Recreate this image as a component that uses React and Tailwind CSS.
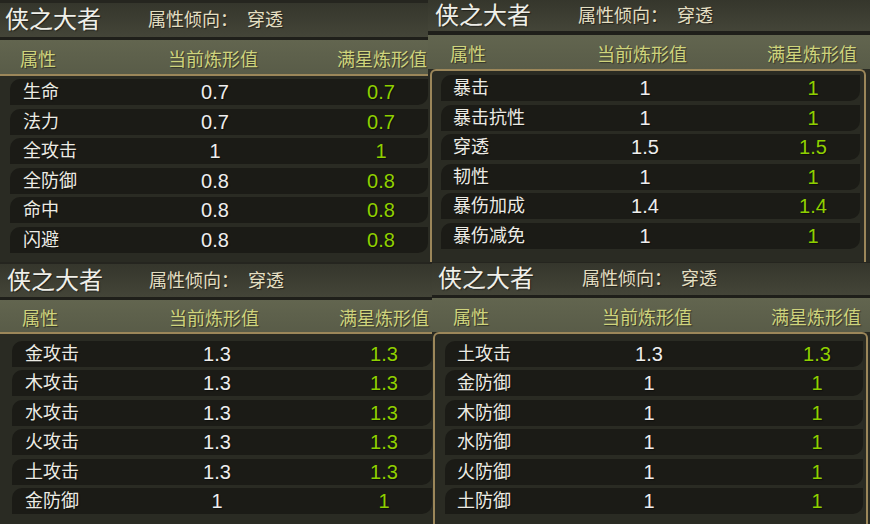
import React from "react";

const panels = [
  {
    w: "w-[428px]",
    strip: "h-[3px]",
    title: "h-[34px] pl-[5px]",
    tend: "ml-[47px]",
    dark: "h-[3px]",
    header: "h-[34px] pt-[5px]",
    hcols: "grid-cols-[163px_100px_69px_100px]",
    hpl: "pl-[20px]",
    box: "border-t-2 pt-[3px] pl-[10px] gap-[3.6px]",
    rcols: "grid-cols-[155px_100px_66px_100px]",
    rpl: "pl-[13px]",
    rows: [
      ["生命", "0.7"],
      ["法力", "0.7"],
      ["全攻击", "1"],
      ["全防御", "0.8"],
      ["命中", "0.8"],
      ["闪避", "0.8"],
    ],
  },
  {
    w: "w-[442px]",
    strip: "h-0",
    title: "h-[31px] pl-[7px]",
    tend: "ml-[47px]",
    dark: "h-[4px]",
    header: "h-[34px] pt-[5px]",
    hcols: "grid-cols-[164px_100px_70px_100px]",
    hpl: "pl-[22px]",
    box: "ml-[2px] w-[436px] border-x-2 border-t-2 rounded-t-[6px] pt-[4px] pl-[9px] pr-[4px] gap-[3.6px]",
    rcols: "grid-cols-[154px_100px_68px_100px]",
    rpl: "pl-[12px]",
    rows: [
      ["暴击", "1"],
      ["暴击抗性", "1"],
      ["穿透", "1.5"],
      ["韧性", "1"],
      ["暴伤加成", "1.4"],
      ["暴伤减免", "1"],
    ],
  },
  {
    w: "w-[432px]",
    strip: "h-[2px]",
    title: "h-[33px] pl-[7px]",
    tend: "ml-[46px]",
    dark: "h-[3px]",
    header: "h-[32px] pt-[5px]",
    hcols: "grid-cols-[164px_100px_70px_100px]",
    hpl: "pl-[22px]",
    box: "border-t-2 pt-[7px] pl-[12px] gap-[3.4px]",
    rcols: "grid-cols-[155px_100px_67px_100px]",
    rpl: "pl-[13px]",
    rows: [
      ["金攻击", "1.3"],
      ["木攻击", "1.3"],
      ["水攻击", "1.3"],
      ["火攻击", "1.3"],
      ["土攻击", "1.3"],
      ["金防御", "1"],
    ],
  },
  {
    w: "w-[438px]",
    strip: "h-[1px]",
    title: "h-[32px] pl-[6px]",
    tend: "ml-[48px]",
    dark: "h-[3px]",
    header: "h-[34px] pt-[5px]",
    hcols: "grid-cols-[165px_100px_69px_100px]",
    hpl: "pl-[21px]",
    box: "ml-[1px] w-[435px] border-x-2 border-t-2 rounded-t-[6px] pt-[7px] pl-[10px] pr-[3px] gap-[3.4px]",
    rcols: "grid-cols-[154px_100px_68px_100px]",
    rpl: "pl-[12px]",
    rows: [
      ["土攻击", "1.3"],
      ["金防御", "1"],
      ["木防御", "1"],
      ["水防御", "1"],
      ["火防御", "1"],
      ["土防御", "1"],
    ],
  },
];

function Row({ label, val, cols, pl }) {
  return (
    <div
      className={`grid h-[26px] shrink-0 items-center rounded-tl-[10px] rounded-br-[10px] bg-[#1b1b16] ${cols}`}
    >
      <span className={`${pl} text-[18px] leading-none text-[#ecebe4]`}>{label}</span>
      <span className="text-center text-[20px] leading-none text-[#eeeeee]">{val}</span>
      <span />
      <span className="text-center text-[20px] leading-none text-[#8fd000]">{val}</span>
    </div>
  );
}

function Panel({ p }) {
  return (
    <div className={`flex h-[262px] shrink-0 flex-col overflow-hidden bg-[#2a2b23] ${p.w}`}>
      <div className={`shrink-0 bg-[#25251f] ${p.strip}`} />
      <div
        className={`flex shrink-0 items-center bg-gradient-to-b from-[#35362c] to-[#444538] ${p.title}`}
      >
        <span className="text-[24px] leading-none text-[#efefe9]">侠之大者</span>
        <span className={`text-[18px] leading-none text-[#e4dfc2] ${p.tend}`}>属性倾向：</span>
        <span className="ml-[9px] text-[18px] leading-none text-[#e4dfc2]">穿透</span>
      </div>
      <div className={`shrink-0 bg-[#1f1f1a] ${p.dark}`} />
      <div
        className={`grid shrink-0 items-center bg-gradient-to-b from-[#62654f] to-[#595c48] text-[18px] leading-none text-[#cfd47c] ${p.header} ${p.hcols}`}
      >
        <span className={p.hpl}>属性</span>
        <span className="text-center">当前炼形值</span>
        <span />
        <span className="text-center">满星炼形值</span>
      </div>
      <div className={`flex flex-1 flex-col border-[#9c875a] ${p.box}`}>
        {p.rows.map(([l, v], i) => (
          <Row key={i} label={l} val={v} cols={p.rcols} pl={p.rpl} />
        ))}
      </div>
    </div>
  );
}

export default function App() {
  return (
    <div className="flex h-[524px] w-[870px] flex-col overflow-hidden bg-[#2a2b23] [font-family:'Liberation_Sans','Noto_Sans_CJK_SC',sans-serif] [text-shadow:1px_1px_1px_rgba(0,0,0,0.45)]">
      <div className="flex">
        <Panel p={panels[0]} />
        <Panel p={panels[1]} />
      </div>
      <div className="flex">
        <Panel p={panels[2]} />
        <Panel p={panels[3]} />
      </div>
    </div>
  );
}
